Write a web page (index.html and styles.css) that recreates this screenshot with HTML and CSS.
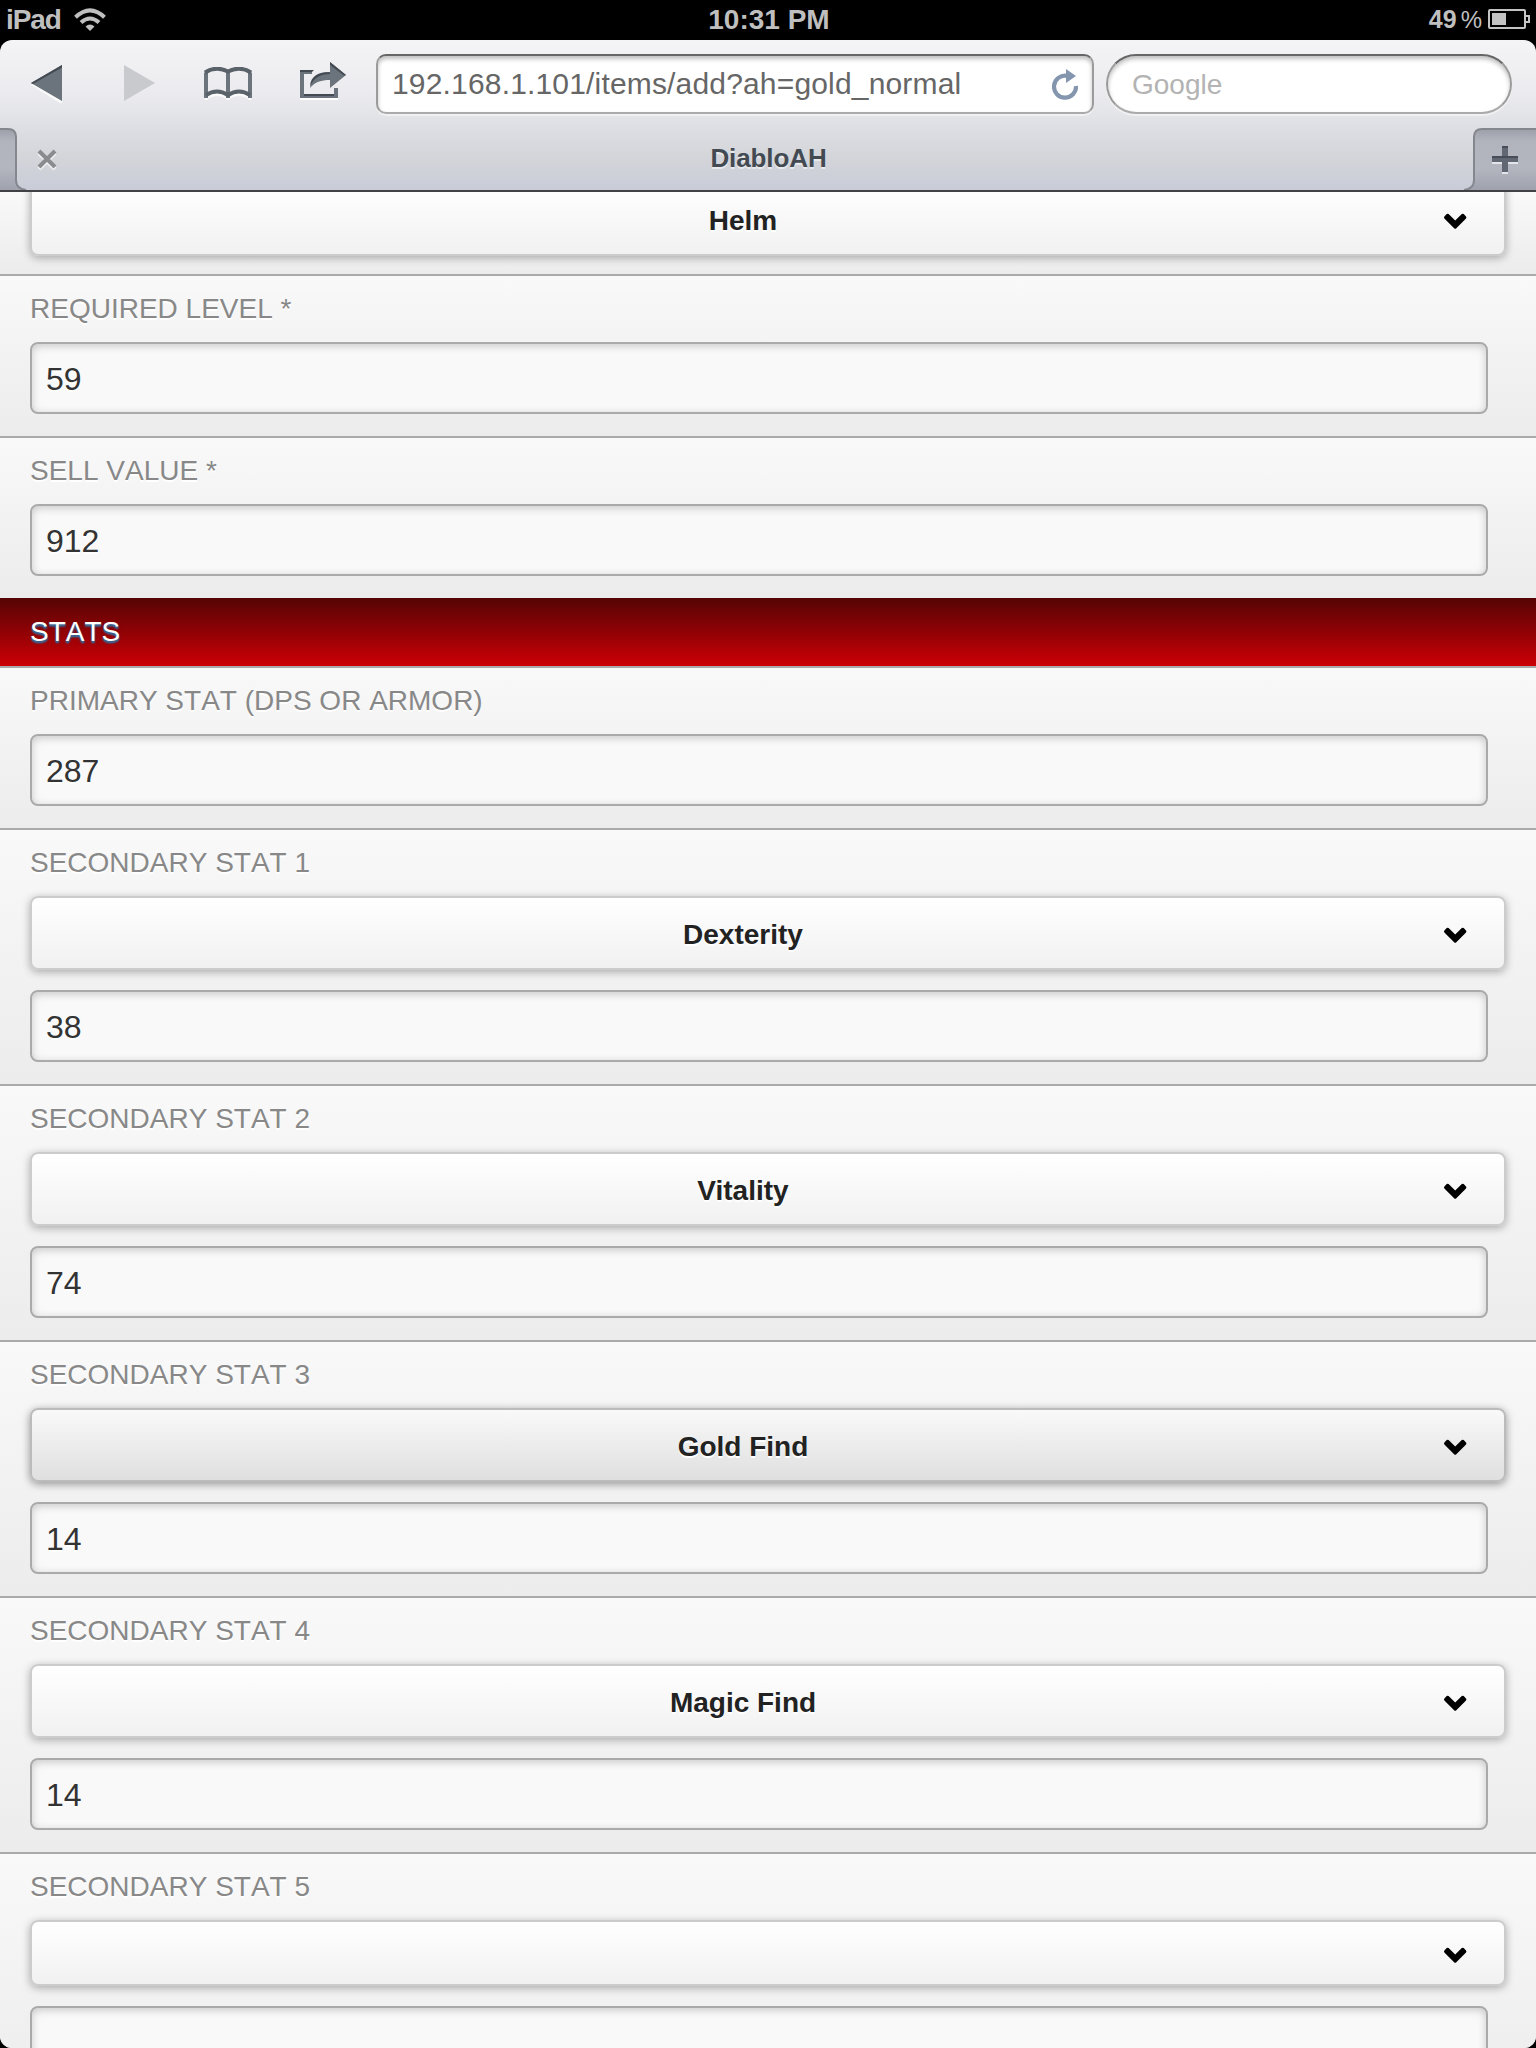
FILE: index.html
```html
<!DOCTYPE html>
<html lang="en">
<head>
<meta charset="utf-8">
<title>DiabloAH</title>
<link rel="stylesheet" href="styles.css">
</head>
<body>
<svg width="0" height="0" class="defs">
  <symbol id="chevron" viewBox="0 0 24 16"><path d="M1.600 3.200L3.700 1.100Q4.600 .3 5.600 1.100L12.200 7.400L18.800 1.100Q19.800 .3 20.700 1.100L22.800 3.200Q24 4.500 22.800 5.700L13.300 15.200Q12.200 16.200 11.100 15.200L1.600 5.700Q.4 4.500 1.600 3.200Z"/></symbol>
</svg>
<div class="screen">
  <header class="status">
    <div class="carrier"><span>iPad</span>
      <svg width="32" height="24" viewBox="0 0 32 24" fill="none" stroke="#bfbfbf" stroke-width="4"><path d="M1.500 9.200Q16-4.600 30.500 9.200"/><path d="M7 14.500Q16 6.500 25 14.500"/><path d="M16 23L11.500 18.500Q16 14.500 20.500 18.500Z" fill="#bfbfbf" stroke="none"/></svg>
    </div>
    <div class="time">10:31 PM</div>
    <div class="power"><b>49</b><span>%</span>
      <svg width="43" height="20" viewBox="0 0 43 20"><rect x="1" y="1" width="36" height="18" rx="1" fill="none" stroke="#c4c4c4" stroke-width="2"/><rect x="4" y="4" width="14" height="12" fill="#c4c4c4"/><path d="M38 7H41V13H38" fill="none" stroke="#c4c4c4" stroke-width="2"/></svg>
    </div>
  </header>
  <div class="chrome">
    <div class="toolbar">
      <nav class="icons">
        <svg width="132" height="40" viewBox="0 0 132 40"><path d="M1 22L32 4V40H30Z" fill="#fafafa"/><path d="M1 20L32 2V38Z" fill="#6b737c"/><path d="M1 20L32 2V4.500L3 21Z" fill="#434a51"/><path d="M94 2L125 20L94 38Z" fill="#c9cace"/></svg>
        <svg width="48" height="34" viewBox="0 0 48 34"><g fill="none"><path d="M2 33V6Q13-1 24 6V33M46 33V6Q35-1 24 6M2 31Q13 24 24 31Q35 24 46 31" stroke="#fafafa" stroke-width="3"/><path d="M2 31V5.500M24 5V31M46 31V5.500" stroke="#6b737c" stroke-width="4"/><path d="M1 5.500Q12-1.500 24 4.500Q36-1.500 47 5.500M2 28Q13 21 24 28Q35 21 46 28" stroke="#596169" stroke-width="4"/></g></svg>
        <svg width="48" height="40" viewBox="0 0 48 40"><path d="M0 37H38" stroke="#fff" stroke-width="2"/><path d="M12 10H2V34H36V26" fill="none" stroke="#6b737c" stroke-width="4"/><path d="M0 8H14L12 10H0ZM4 32H34V34H4Z" fill="#434a51"/><path d="M10 26C11 15 18 10 30 10V0L46 13L30 26V18C21 18 15 20 10 26Z" fill="#6b737c"/><path d="M10 24C11 14 18 10 30 10V0L46 13L44 13.500L30 3V12C20 12 14 16 10 24Z" fill="#434a51"/></svg>
      </nav>
      <div class="url"><span>192.168.1.101/items/add?ah=gold_normal</span>
        <svg width="26" height="31" viewBox="0 0 26 31"><path d="M15 6.900A11 11 0 1 0 24 17" fill="none" stroke="#8496ae" stroke-width="4.200"/><path d="M14 0L24 7L14 14Z" fill="#8496ae"/></svg>
      </div>
      <div class="search">Google</div>
    </div>
    <div class="tabs">
      <svg class="stub" width="28" height="62" viewBox="0 0 28 62"><defs><linearGradient id="dark" x2="0" y2="1"><stop offset="0" stop-color="#9d9fa9"/><stop offset=".2" stop-color="#b1b3bd"/><stop offset=".65" stop-color="#b3b5bf"/><stop offset="1" stop-color="#9fa2ad"/></linearGradient></defs><path d="M-2 1H8Q16 1 16 9V52Q16 61 26 62H-2Z" fill="url(#dark)"/><path d="M-2 1H8Q16 1 16 9V52Q16 61 26 62" fill="none" stroke="#85878f" stroke-width="2"/></svg>
      <svg class="close" width="20" height="22" viewBox="0 0 20 22" fill="none" stroke-width="4"><path d="M2 4L18 20M18 4L2 20" stroke="#f2f2f3"/><path d="M2 2L18 18M18 2L2 18" stroke="#898b8e"/></svg>
      <div class="tabtitle">DiabloAH</div>
      <svg class="new" width="74" height="62" viewBox="0 0 74 62"><path d="M76 1H20Q12 1 12 9V52Q12 61 2 62H76Z" fill="url(#dark)"/><path d="M76 1H20Q12 1 12 9V52Q12 61 2 62" fill="none" stroke="#85878f" stroke-width="2"/><path d="M30 33H56M43 20V46" stroke="#e4e5ea" stroke-width="6"/><path d="M30 31H56M43 18V44" stroke="#626873" stroke-width="6"/><path d="M30 29H56M40 19H46" stroke="#484d57" stroke-width="2"/></svg>
    </div>
  </div>
  <main>
    <section class="row partial"><div class="select"><span>Helm</span><svg width="24" height="16"><use href="#chevron"/></svg></div></section>
    <section class="row"><label>REQUIRED LEVEL *</label><input value="59"></section>
    <section class="row"><label>SELL VALUE *</label><input value="912"></section>
    <h2>STATS</h2>
    <section class="row"><label>PRIMARY STAT (DPS OR ARMOR)</label><input value="287"></section>
    <section class="row"><label>SECONDARY STAT 1</label><div class="select"><span>Dexterity</span><svg width="24" height="16"><use href="#chevron"/></svg></div><input value="38"></section>
    <section class="row"><label>SECONDARY STAT 2</label><div class="select"><span>Vitality</span><svg width="24" height="16"><use href="#chevron"/></svg></div><input value="74"></section>
    <section class="row"><label>SECONDARY STAT 3</label><div class="select hover"><span>Gold Find</span><svg width="24" height="16"><use href="#chevron"/></svg></div><input value="14"></section>
    <section class="row"><label>SECONDARY STAT 4</label><div class="select"><span>Magic Find</span><svg width="24" height="16"><use href="#chevron"/></svg></div><input value="14"></section>
    <section class="row"><label>SECONDARY STAT 5</label><div class="select empty"><span></span><svg width="24" height="16"><use href="#chevron"/></svg></div><input value=""></section>
  </main>
</div>
</body>
</html>
```
FILE: styles.css
```css
* { box-sizing: border-box; }
html, body { margin: 0; background: #000; }
body { font-family: "Liberation Sans", Arial, sans-serif; height: 2048px; overflow: hidden; }
svg { display: block; flex: none; }
.defs { position: absolute; }
.screen { width: 1536px; height: 2048px; display: flex; flex-direction: column; overflow: hidden; border-radius: 0 0 12px 12px; }

.status { flex: none; height: 40px; display: grid; grid-template-columns: 1fr auto 1fr; line-height: 39px; color: #bfbfbf; font-size: 28px; font-weight: bold; }
.carrier { display: flex; padding-left: 6px; }
.carrier span { width: 68px; letter-spacing: -1.1px; }
.carrier svg { margin-top: 8px; }
.time { padding-left: 2px; }
.power { display: flex; justify-content: flex-end; padding-right: 5px; font-size: 25px; }
.power span { font-weight: normal; font-size: 24px; margin: 0 6px 0 4px; }
.power svg { margin-top: 9px; }

.chrome { flex: none; height: 152px; border-bottom: 2px solid #404145; border-radius: 12px 12px 0 0; background: linear-gradient(#f4f4f6, #ebebef 36%, #dcdde2 62%, #d5d6da 76%, #c9ccd8); }
.toolbar { height: 88px; display: flex; padding: 14px 24px 0 30px; }
.icons { display: flex; width: 346px; padding-top: 9px; }
.icons svg + svg { margin: 4px 0 0 42px; }
.icons svg:last-child { margin: -1px 0 0 48px; }
.url, .search { height: 60px; background: #fff; border: 2px solid #9b9b9b; border-top-color: #666; border-bottom-color: #aaa; line-height: 57px; box-shadow: inset 0 3px 4px rgba(0,0,0,.25), 0 2px 1px rgba(255,255,255,.5); }
.url { display: flex; justify-content: space-between; width: 718px; border-radius: 10px; font-size: 30px; color: #666; padding: 0 14px 0 14px; letter-spacing: .17px; line-height: 56px; }
.url svg { margin-top: 13px; }
.search { margin-left: 12px; width: 406px; border-radius: 30px; font-size: 28px; color: #b3b3b3; padding-left: 24px; }
.tabs { height: 62px; display: flex; }
.close { margin: 21px 0 0 9px; }
.tabtitle { flex: 1; padding-left: 18px; text-align: center; font-size: 26px; letter-spacing: -.1px; font-weight: bold; color: #434a52; line-height: 60px; text-shadow: 0 2px 0 rgba(255,255,255,.55); }

main { flex: 1; overflow: hidden; background: #eee; }
.row { border-top: 2px solid #aaa; padding: 0 30px 22px; background: linear-gradient(#f9f9f9, #ececec); }
.partial { height: 82px; border-top: 0; padding-bottom: 18px; display: flex; align-items: flex-end; overflow: hidden; }
label { display: block; height: 66px; line-height: 66px; font-size: 28px; font-kerning: none; color: #888; text-shadow: 0 2px 0 #fff; }
input { display: block; width: 1458px; height: 72px; border: 2px solid #aaa; border-radius: 8px; background: #f9f9f9; padding: 2px 14px 0; font: 32px "Liberation Sans", Arial, sans-serif; color: #333; box-shadow: inset 0 2px 8px rgba(0,0,0,.2); text-shadow: 0 2px 0 #fff; outline: 0; }
.select { flex: none; display: flex; align-items: center; width: 1476px; height: 74px; border: 2px solid #ccc; border-radius: 8px; background: linear-gradient(#fff, #f1f1f1); padding: 4px 37px 0 11px; box-shadow: 0 2px 8px rgba(0,0,0,.3); font-size: 28px; font-weight: bold; color: #222; text-shadow: 0 2px 0 #fff; }
.select span { flex: 1; text-align: center; }
.select + input { margin-top: 20px; }
.hover { background: linear-gradient(#f9f9f9, #dfdfdf); border-color: #bbb; box-shadow: 0 2px 8px rgba(0,0,0,.4); }
.empty { height: 66px; }
h2 { margin: 0; height: 68px; padding-left: 30px; line-height: 68px; font-size: 28px; font-weight: normal; font-kerning: none; color: #fff; background: linear-gradient(#550404, #cc0006); text-shadow: 0 2px 2px #3373a5, 0 2px 2px #444466; }
```
